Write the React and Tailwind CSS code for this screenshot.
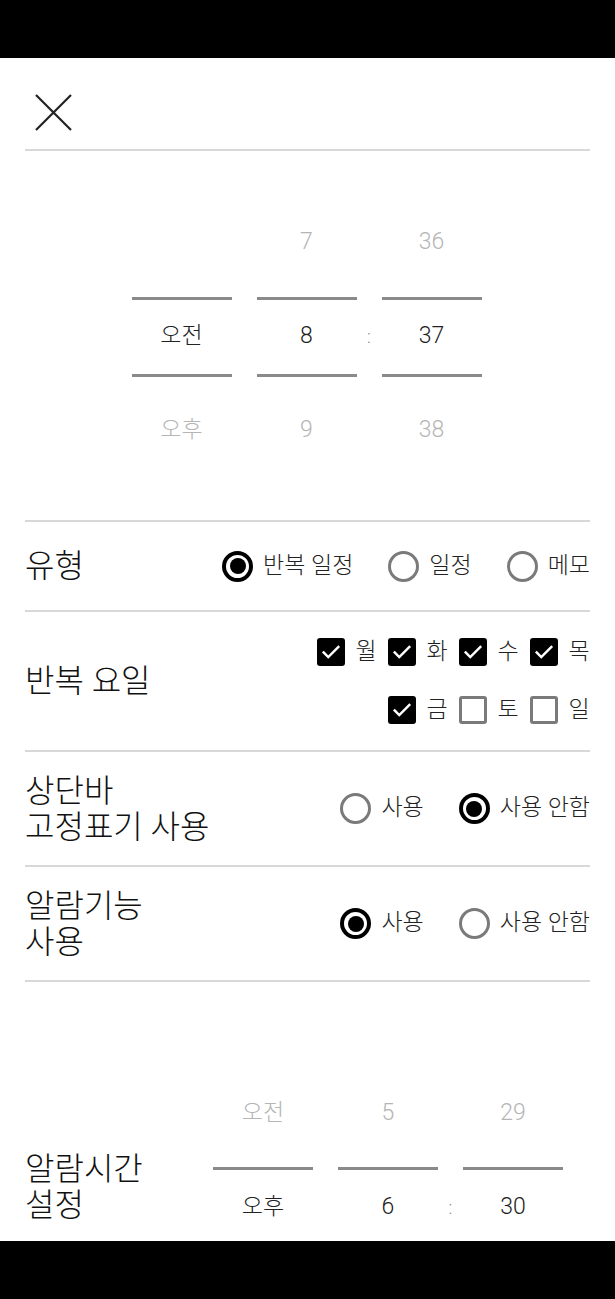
import React from 'react'

const font = { fontFamily: 'Roboto, "Noto Sans CJK KR", sans-serif' }

function Picker({ top, mid, bottom }) {
  return (
    <div className="flex w-[352px] text-[23px]">
      {[0, 1, 2].map((i) => (
        <React.Fragment key={i}>
          {i > 0 && (
            <div className="w-[25px] flex flex-col">
              <div className="h-[94px]" />
              <div className="h-[94px] flex items-center justify-center text-[#888] text-[18px]">{i === 2 ? ':' : ''}</div>
            </div>
          )}
          <div className="w-[100px] flex flex-col">
            <div className="h-[94px] flex items-center justify-center text-[#b5b5b5]">{top[i]}</div>
            <div className="h-[94px] flex items-center">
              <div className="h-[80px] w-full border-y-[3px] border-[#8a8a8a] flex items-center justify-center text-[#222]">
                {mid[i]}
              </div>
            </div>
            <div className="h-[94px] flex items-center justify-center text-[#b5b5b5]">{bottom[i]}</div>
          </div>
        </React.Fragment>
      ))}
    </div>
  )
}

function Radio({ checked, label }) {
  return (
    <div className="flex items-center gap-[10px]">
      {checked ? (
        <div className="w-[31px] h-[31px] rounded-full border-[4px] border-black flex items-center justify-center">
          <div className="w-[16px] h-[16px] rounded-full bg-black" />
        </div>
      ) : (
        <div className="w-[31px] h-[31px] rounded-full border-[3px] border-[#7a7a7a]" />
      )}
      <span className="text-[23px] text-[#222]">{label}</span>
    </div>
  )
}

function Check({ checked, label }) {
  return (
    <div className="flex items-center gap-[10px]">
      {checked ? (
        <div className="w-[28px] h-[28px] rounded-[3px] bg-black flex items-center justify-center">
          <svg width="22" height="22" viewBox="0 0 24 24" fill="none" stroke="white" strokeWidth="2.6" strokeLinecap="square">
            <path d="M4 12.5l5 5L20 6.5" />
          </svg>
        </div>
      ) : (
        <div className="w-[28px] h-[28px] rounded-[3px] border-[3px] border-[#7a7a7a]" />
      )}
      <span className="text-[23px] text-[#222] w-[22px] text-center">{label}</span>
    </div>
  )
}

export default function App() {
  return (
    <div className="w-full h-[1299px] flex flex-col bg-white overflow-hidden font-light" style={font}>
      <div className="h-[58px] bg-black shrink-0" />
      <div className="flex-1 overflow-hidden px-[25px]">
        {/* header */}
        <div className="h-[93px] flex items-start pt-[36px] pl-[10px] border-b-2 border-[#d8d8d8]">
          <svg width="37" height="37" viewBox="0 0 37 37" stroke="#222" strokeWidth="2.2" fill="none">
            <path d="M1 1L36 36M36 1L1 36" />
          </svg>
        </div>
        {/* time picker */}
        <div className="h-[369px] flex items-center justify-center pt-[2px]">
          <Picker top={['', '7', '36']} mid={['오전', '8', '37']} bottom={['오후', '9', '38']} />
        </div>
        <div className="h-[90px] flex items-center justify-between border-t-2 border-[#d8d8d8]">
          <span className="text-[32px] text-[#111]">유형</span>
          <div className="flex items-center gap-[35px]">
            <Radio checked label="반복 일정" />
            <Radio label="일정" />
            <Radio label="메모" />
          </div>
        </div>
        <div className="h-[140px] flex items-center justify-between border-t-2 border-[#d8d8d8]">
          <span className="text-[32px] text-[#111]">반복 요일</span>
          <div className="flex flex-col items-end gap-[23px]">
            <div className="flex items-center gap-[11px]">
              <Check checked label="월" />
              <Check checked label="화" />
              <Check checked label="수" />
              <Check checked label="목" />
            </div>
            <div className="flex items-center gap-[11px]">
              <Check checked label="금" />
              <Check label="토" />
              <Check label="일" />
            </div>
          </div>
        </div>
        <div className="h-[115px] flex items-center justify-between border-t-2 border-[#d8d8d8]">
          <span className="text-[32px] leading-[36px] text-[#111]">
            상단바
            <br />
            고정표기 사용
          </span>
          <div className="flex items-center gap-[35px]">
            <Radio label="사용" />
            <Radio checked label="사용 안함" />
          </div>
        </div>
        <div className="h-[117px] flex items-center justify-between border-y-2 border-[#d8d8d8]">
          <span className="text-[32px] leading-[36px] text-[#111]">
            알람기능
            <br />
            사용
          </span>
          <div className="flex items-center gap-[35px]">
            <Radio checked label="사용" />
            <Radio label="사용 안함" />
          </div>
        </div>
        {/* alarm time */}
        <div className="flex items-start pt-[84px]">
          <span className="w-[188px] mt-[85px] text-[32px] leading-[36px] text-[#111]">
            알람시간
            <br />
            설정
          </span>
          <Picker top={['오전', '5', '29']} mid={['오후', '6', '30']} bottom={['', '', '']} />
        </div>
      </div>
      <div className="h-[58px] bg-black shrink-0" />
    </div>
  )
}
